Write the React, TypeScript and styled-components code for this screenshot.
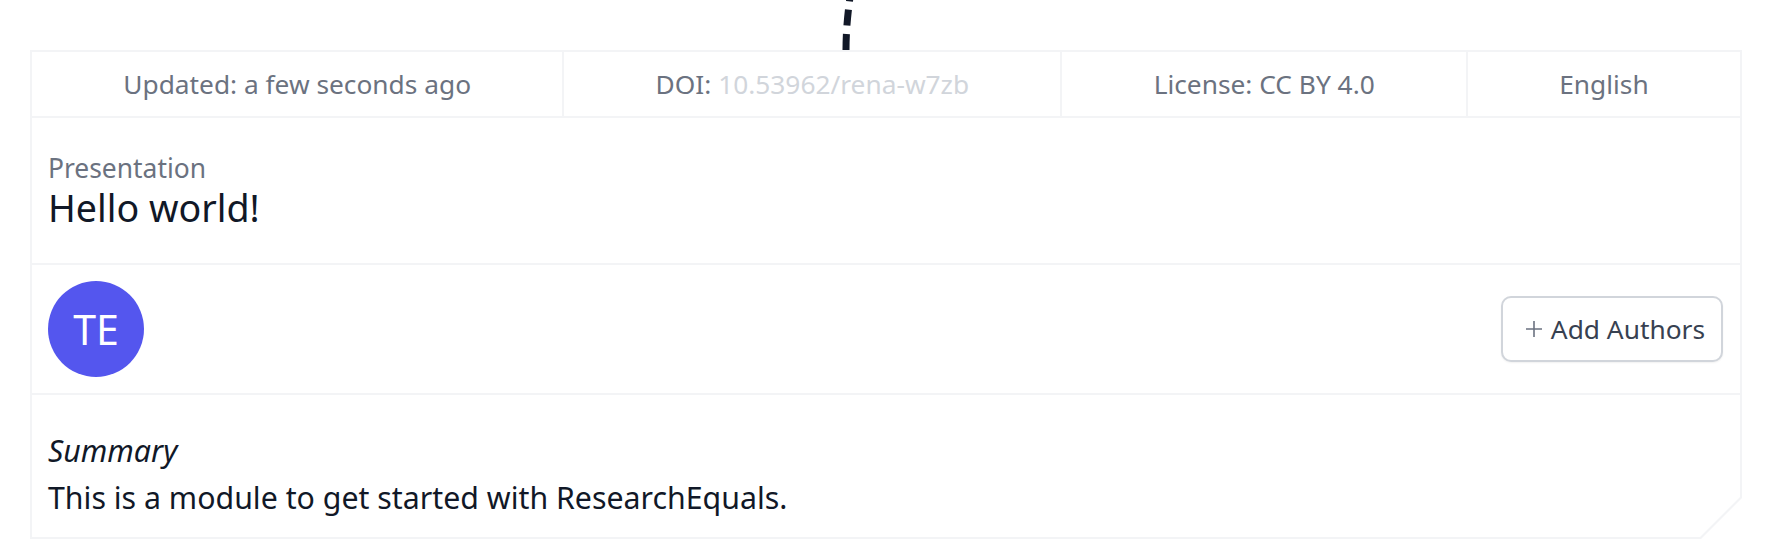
import React from "react";
import styled, { createGlobalStyle } from "styled-components";

const GlobalStyle = createGlobalStyle`
  html, body {
    margin: 0;
    padding: 0;
    background: #ffffff;
  }
  body {
    font-family: "Noto Sans", "Open Sans", Roboto, sans-serif;
    color: #111827;
  }
  * { box-sizing: border-box; }
`;

const Page = styled.div`
  padding-left: 30px;
  width: 1742px;
`;

const Connector = styled.svg`
  display: block;
  width: 1712px;
  height: 50px;
  overflow: visible;
`;

const CardFrame = styled.div`
  background: #f3f4f6;
  padding: 2px;
  width: 1712px;
  clip-path: polygon(0 0, 100% 0, 100% calc(100% - 41px), calc(100% - 41px) 100%, 0 100%);
`;

const CardInner = styled.div`
  background: #ffffff;
  display: flex;
  flex-direction: column;
  clip-path: polygon(0 0, 100% 0, 100% calc(100% - 40px), calc(100% - 40px) 100%, 0 100%);
`;

const MetaRow = styled.div`
  display: flex;
  height: 66px;
  border-bottom: 2px solid #f3f4f6;
`;

const MetaCell = styled.div<{ $first?: boolean }>`
  flex: 1 1 auto;
  display: flex;
  align-items: center;
  justify-content: center;
  white-space: nowrap;
  font-size: 26.3px;
  line-height: 37px;
  color: #6b7280;
  border-left: ${(p) => (p.$first ? "none" : "2px solid #f3f4f6")};
`;

const Muted = styled.span`
  color: #d1d5db;
`;

const TitleSection = styled.div`
  padding: 32px 16px 34px;
  border-bottom: 2px solid #f3f4f6;
`;

const TypeLabel = styled.div`
  font-size: 26.4px;
  line-height: 36px;
  color: #6b7280;
`;

const Title = styled.h1`
  margin: 0;
  font-size: 37.6px;
  line-height: 43px;
  font-weight: 400;
  color: #111827;
`;

const AuthorRow = styled.div`
  display: flex;
  align-items: center;
  justify-content: space-between;
  padding: 16px 17px 16px 16px;
  border-bottom: 2px solid #f3f4f6;
`;

const Avatar = styled.div<{ $bg: string }>`
  width: 96px;
  height: 96px;
  border-radius: 50%;
  background: ${(p) => p.$bg};
  color: #ffffff;
  display: flex;
  align-items: center;
  justify-content: center;
  font-size: 41px;
  font-weight: 400;
`;

const AddButton = styled.button`
  display: flex;
  align-items: center;
  gap: 4px;
  height: 66px;
  padding: 0 16px 0 18px;
  border: 2px solid #d1d5db;
  border-radius: 10px;
  background: #ffffff;
  box-shadow: 0 1px 2px rgba(0, 0, 0, 0.06);
  font-family: "Noto Sans", "Open Sans", Roboto, sans-serif;
  font-size: 26.3px;
  line-height: 37px;
  color: #374151;
  cursor: pointer;
`;

const PlusIcon = styled.svg`
  width: 26px;
  height: 26px;
  flex: none;
`;

const SummarySection = styled.div`
  padding: 32px 16px 16px;
  font-size: 30.3px;
  line-height: 47px;
  color: #111827;
`;

const SummaryLabel = styled.div`
  font-style: italic;
`;

const SummaryText = styled.p`
  margin: 0;
`;

export default function App() {
  return (
    <>
      <GlobalStyle />
      <Page>
        <Connector viewBox="0 0 1712 50" aria-hidden="true">
          <path
            d="M 816 50 Q 816 24 820.5 -6"
            fill="none"
            stroke="#111827"
            strokeWidth="7"
            strokeDasharray="16.3 8.2"
          />
        </Connector>
        <CardFrame>
          <CardInner>
            <MetaRow>
              <MetaCell $first>Updated: a few seconds ago</MetaCell>
              <MetaCell>
                DOI:&nbsp;<Muted>10.53962/rena-w7zb</Muted>
              </MetaCell>
              <MetaCell>License: CC BY 4.0</MetaCell>
              <MetaCell>English</MetaCell>
            </MetaRow>
            <TitleSection>
              <TypeLabel>Presentation</TypeLabel>
              <Title>Hello world!</Title>
            </TitleSection>
            <AuthorRow>
              <Avatar $bg="#5456ee">TE</Avatar>
              <AddButton type="button">
                <PlusIcon viewBox="0 0 26 26" aria-hidden="true">
                  <path d="M13 5 V21 M5 13 H21" stroke="#6b7280" strokeWidth="1.6" fill="none" />
                </PlusIcon>
                Add Authors
              </AddButton>
            </AuthorRow>
            <SummarySection>
              <SummaryLabel>Summary</SummaryLabel>
              <SummaryText>This is a module to get started with ResearchEquals.</SummaryText>
            </SummarySection>
          </CardInner>
        </CardFrame>
      </Page>
    </>
  );
}
